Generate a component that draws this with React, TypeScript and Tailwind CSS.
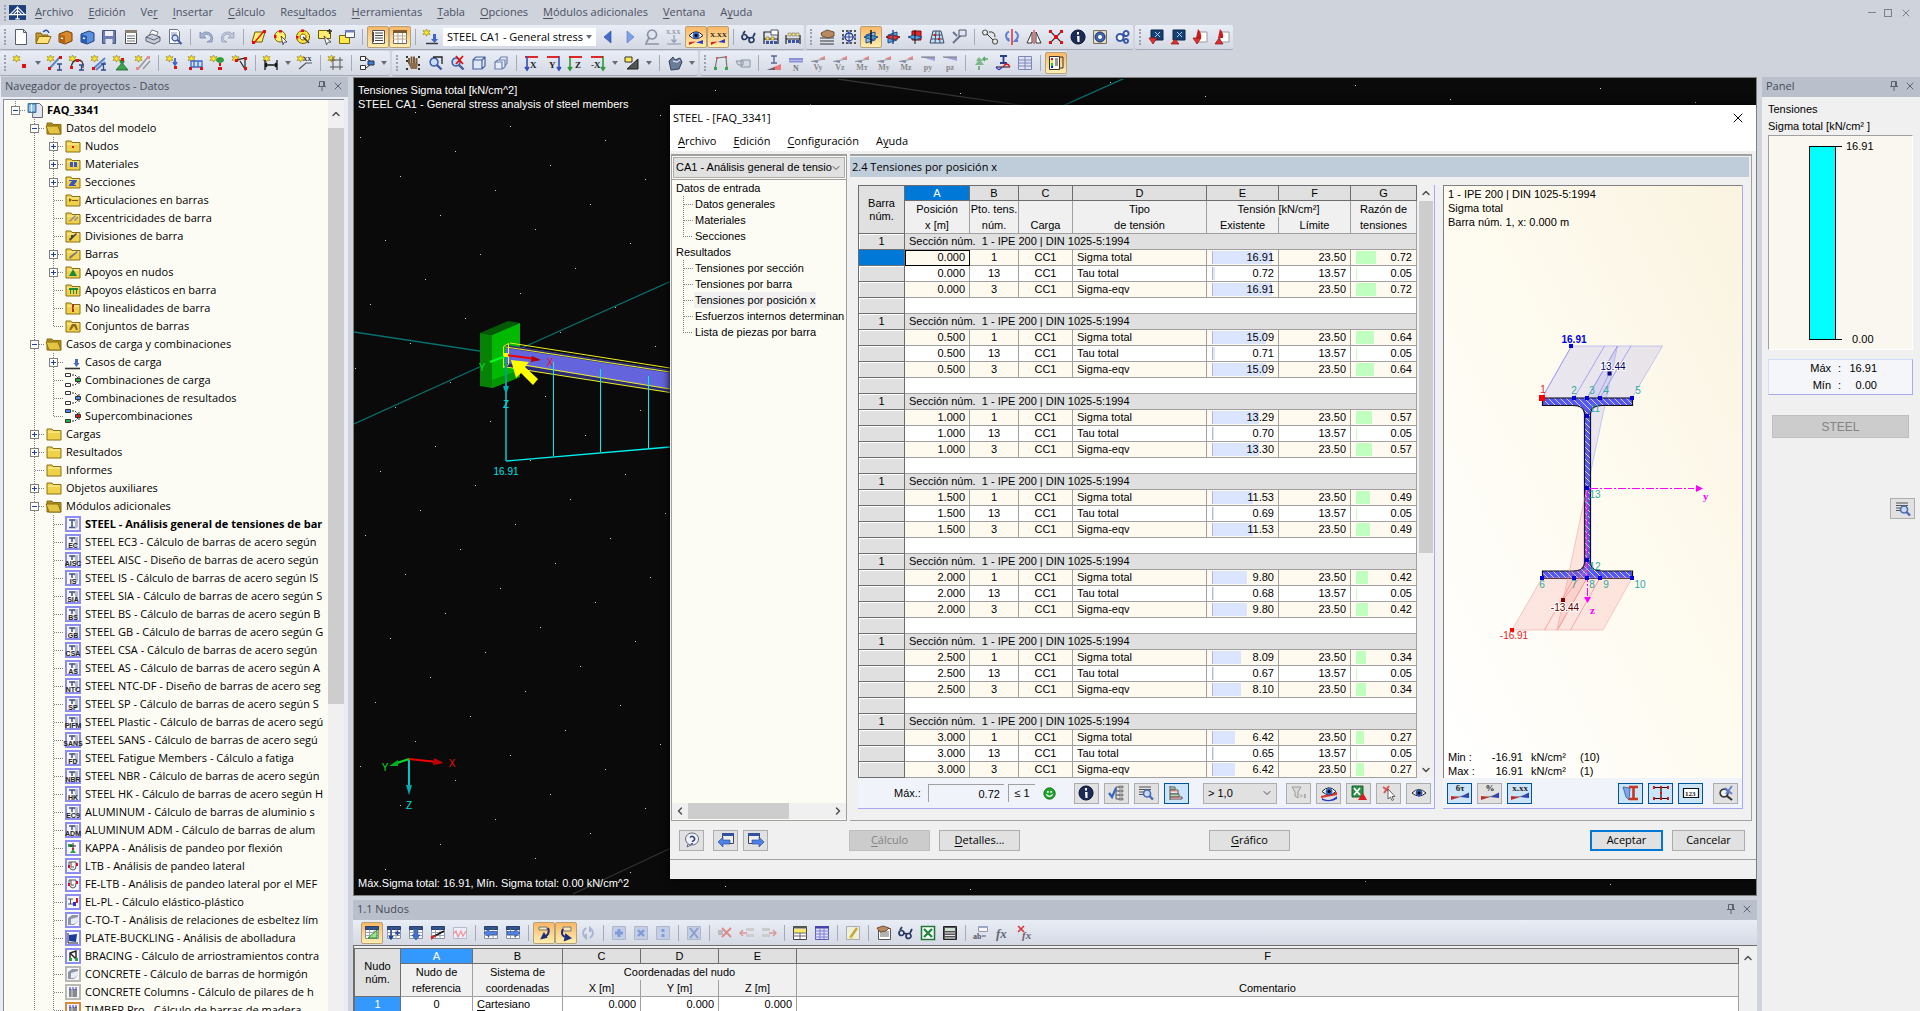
import type { ReactNode } from 'react'
import { ChevronDown, ChevronLeft, ChevronRight, ChevronUp, X } from 'lucide-react'

/* ---------- icons: [path, fill, stroke, stroke width] on a 16x16 grid ---------- */

type Shape = [string, string, string?, number?]
type Label = [string, number, number, string, number]

const STAR: Shape = ['M3.500 0l1 2.300 2.500-.8-1.300 2 1.300 2-2.500-.6-1 2.300-1-2.300L0 5.500l1.300-2L0 1.500l2.500.8z', '#ffe92b', '#8f7a00', 0.6]
const GRID: Shape = ['M1 2h14M1 5h14M1 8h14M1 11h14M1 14h14', 'none', '#333', 1]
const SHEET: Shape[] = [
    ['M1.500 2.500h13v11h-13z', '#fff', '#8a93a5'],
    ['M1.500 1.500h13v3h-13z', '#33558c', '#26406b'],
    ['M1.500 7.500h13M1.500 10.500h13M5.500 4.500v9M10 4.500v9', 'none', '#9aa3b5'],
]
const RAMP: Shape[] = [
    ['M-1 15v-4l9 1z', '#d22'],
    ['M17 7.500v5.500l-9-1z', '#2b3fc0'],
    ['M-1 13L17 10', 'none', '#555', 0.6],
]
const FADED_RAMP: Shape[] = [
    ['M9 3.500L15 1v4z', '#e88'],
    ['M1 6.500L8 5v3z', '#88a'],
    ['M1 6.500L15 4', 'none', '#999'],
]
const LENS: Shape[] = [
    ['M7 3a4 4 0 1 0 .1 0z', '#c9dcf5', '#3c5aa6', 1.5],
    ['M10 10l4.500 4.500', 'none', '#3c5aa6', 2.4],
]
const EYE: Shape[] = [
    ['M1 6.500Q8 -1 15 6.500Q8 13 1 6.500z', '#fff', '#222'],
    ['M8 3a3.500 3.500 0 1 0 .1 0z', '#2f63c8'],
    ['M8 5a1.500 1.500 0 1 0 .1 0z', '#000'],
]
const DISC_I: Shape[] = [['M8 1a7 7 0 1 0 .1 0z', '#1b2a56', '#0a1430'], ['M7 7h2.500v6h-2zM7 3h2v2.500h-2z', '#fff']]

const ICONS: Record<string, Shape[]> = {
    new: [['M2.500 .5h8l3 3v12h-11z', '#fff', '#555c6b'], ['M10.500 .5v3h3', 'none', '#555c6b']],
    open: [['M1 4h5l1 2h6v8H1z', '#c79a2b', '#7d5c10'], ['M4 7.500h12l-3 7H1z', '#ffe27a', '#8a6914'], ['M8 3q4-4 6 1', 'none', '#2a4fa8', 1.4]],
    cabinetA: [['M2 5l8-3 5 2v8l-7 3-6-2z', '#d9882c', '#70400b'], ['M2 5l6 2v8l-6-2z', '#b06313'], ['M4 9l2 .7', 'none', '#fff', 1.4]],
    cabinetB: [['M2 5l8-3 5 2v8l-7 3-6-2z', '#5c8fdd', '#1d3f80'], ['M2 5l6 2v8l-6-2z', '#2b5cb0'], ['M4 9l2 .7', 'none', '#fff', 1.4]],
    save: [['M1.500 1.500h13v13h-13z', '#6c7fae', '#46557c'], ['M4 2h8v5H4z', '#eef'], ['M4.500 10h7v5h-7z', '#dde3f0']],
    clip: [['M2.500 2.500h11v12h-11z', '#fff', '#4d4d4d'], ['M2 1h12v3H2z', '#8b8172'], ['M4 7h8M4 9.500h8M4 12h8', 'none', '#6b6f7a']],
    print: [['M4 6l3-5 6 2-2 5z', '#fff', '#777'], ['M1 8l6-3 8 3v4l-6 3-8-3z', '#c8cdda', '#59606f'], ['M1 8l8 3 6-3', 'none', '#59606f']],
    preview: [['M2.500 .5h8l2 2v12h-10z', '#fff', '#6b7386'], ['M4 4h6M4 6h4', 'none', '#8894b0'], ['M8 6a3 3 0 1 0 .1 0z', '#cfe0fa', '#3c5aa6', 1.3], ['M10.500 11l4 4', 'none', '#3c5aa6', 2]],
    undo: [['M2 3v6h6L5.500 6.800Q9 3.500 12 7T9 13h5Q16 6 11 3.500 6 2 4 5z', '#a9b6d3', '#6f7fa6', 0.7]],
    redo: [['M14 3v6H8l2.500-2.200Q7 3.500 4 7t3 6H2Q0 6 5 3.500 10 2 12 5z', '#c3cadb', '#8b96b3', 0.7]],
    para: [['M4 3h10l-3 10H1z', '#ffee70', '#6b5b00'], ['M3 14L13 2', 'none', '#d11', 1.4], ['M1 12h3v3H1zM12 1h3v3h-3z', '#d11']],
    circ: [['M7 2a5.500 5.500 0 1 0 .1 0z', '#ffee70', '#6b5b00'], ['M6 1h3v2.500H6zM1 6h2.500v3H1z', '#d11'], ['M8 7l6 6-3 .2-1 2.500z', '#fff', '#333', 0.8]],
    donut: [['M8 1.500a6.500 6.500 0 1 0 .1 0z', '#ffe13a', '#6b5b00'], ['M8 5a3 3 0 1 0 .1 0z', '#fff', '#6b5b00'], ['M6 .5h3v2.500H6zM1 7h2.500v2.500H1z', '#d11'], ['M8 8l6 6', 'none', '#333', 1.4]],
    select: [['M1.500 1.500h12v8h-12z', '#ffee70', '#6b5b00'], ['M10 2h5M12.500 0v5', 'none', '#333', 1.3], ['M7 7l7 6-3 .3-1.500 2.500z', '#fff', '#333', 0.8]],
    winY: [['M.5 6.500h10v8H.5z', '#ffe84d', '#7c6a00'], ['M6.500 1.500h9v7h-9z', '#fff', '#556'], ['M6 1h10v2.500H6z', '#6d7fb3']],
    list: [['M2.500 1.500h12v13h-12z', '#fff', '#555'], ['M5 4h8M5 6.500h8M5 9h8M5 11.500h8', 'none', '#444'], ['M3.500 3v10', 'none', '#444', 1]],
    table: [['M1.500 1.500h13v13h-13z', '#fff', '#666'], ['M1 1h14v3H1z', '#7d5a2b'], ['M1 7h14M1 10h14M6 4v10M10.500 4v10', 'none', '#b9a88c']],
    load: [STAR, ['M3 14.500h12', 'none', '#333', 1.4], ['M10 5h3v5h2l-3.500 4L8 10h2z', '#3f66c4']],
    prev: [['M11 2v12L4 8z', '#3f6cd0', '#28488f', 0.6]],
    next: [['M5 2v12l7-6z', '#7fa2e6', '#5475b8', 0.6]],
    lensOff: [['M8 1a4.500 4.500 0 1 0 .1 0z', '#dfe4ee', '#8a93a5', 1.6], ['M5 9l-3 5M1 15h14', 'none', '#8a93a5', 1.6]],
    arrowOff: [['M8 6v7M5.500 10.500L8 13.500l2.500-3', 'none', '#97a0b5', 1.3], ['M1 15h14', 'none', '#8a93a5']],
    eyeRamp: [...EYE, ['M1 16v-3l7-.5z', '#d22'], ['M15 11v4l-7-1.500z', '#2b3fc0']],
    xxxRamp: [['M1 16v-3l7-.5z', '#d22'], ['M15 10v4l-7-1z', '#2b3fc0']],
    glasses: [['M2 5l2-3M1 8a2.500 2.500 0 1 0 5 0a2.500 2.500 0 1 0 -5 0M8 11a2.500 2.500 0 1 0 5 0a2.500 2.500 0 1 0 -5 0M6 8l3 1M12 8l2-4', 'none', '#24375f', 1.7]],
    fenceA: [['M1 15V3h14v12M1 10h14', 'none', '#222', 1.2], ['M3 8h3v3H3zM8 8h3v3H8z', '#ffe13a', '#555', 0.5], ['M3 12h3v3H3zM7 12h3v3H7zM11 12h3v3h-3z', '#3953a8'], ['M8 1h7v5H8z', '#fff', '#556']],
    fenceB: [['M1 15V6M15 15V6M1 10h14', 'none', '#222', 1.2], ['M3 4h3v3H3zM7 4h3v3H7zM11 4h3v3h-3z', '#ffe97a', '#555', 0.5], ['M3 11h3v3H3zM7 11h3v3H7zM11 11h3v3h-3z', '#3953a8']],
    gridHand: [['M1 9h14M1 12h14M1 15h14', 'none', '#333', 1], ['M2 4l6-3 7 2v4l-6 2-6-2z', '#b98a62', '#5c3c1e', 0.8]],
    gridTarget: [['M1 1h2v2H1zM5 1h2v2H5zM9 1h2v2H9zM13 1h2v2h-2zM1 5h2v2H1zM13 5h2v2h-2zM1 9h2v2H1zM13 9h2v2h-2zM1 13h2v2H1zM5 13h2v2H5zM9 13h2v2H9zM13 13h2v2h-2z', '#555'], ['M8 4a4 4 0 1 0 .1 0z', '#e9ecf5', '#27409a', 1.3], ['M8 1v14M1 8h14', 'none', '#27409a']],
    planeA: [['M3 6l9-3v8l-9 3z', '#8fc0ea', '#1b4f86'], ['M1 8l6-2 8 2-6 3z', '#4f93d6', '#1b4f86'], ['M8 1v14', 'none', '#111', 1.4]],
    planeB: [['M3 6l9-3v8l-9 3z', '#5ea0dc', '#1b4f86'], ['M1 8l6-2 8 2-6 3z', '#e43a3a', '#7c1010'], ['M8 1v14', 'none', '#1b4f86', 1.4]],
    planeC: [['M5 2h9v9H5z', '#e22626', '#7c1010'], ['M1 8l6-2 8 2-6 3z', '#5ea0dc', '#1b4f86'], ['M8 1v14', 'none', '#111']],
    mesh: [['M4 2h8l3 12H1z', '#c5e0f5', '#3d4c66'], ['M3 6h10M2 10h12M7 2L6 14M10 2l1 12', 'none', '#3d4c66'], ['M5 5h2v2H5zM9 9h2v2H9z', '#d11']],
    tool: [['M2 14L11 5M2 3l4 4', 'none', '#6a7693', 2], ['M8 1h7v6H8z', '#dfe6f5', '#556']],
    chain: [['M3 1a2.500 2.500 0 1 0 .1 0zM13 10a2.500 2.500 0 1 0 .1 0z', '#eee', '#555', 1.2], ['M5 5l6 6M7 3q6-1 6 5', 'none', '#333']],
    rotate: [['M5 2.500Q-1 6 5 12l-1 -3M11 2.500q6 3.500 0 9.500l3 0', 'none', '#5c7fd0', 2], ['M8 0v16', 'none', '#d11', 1.3]],
    mirror: [['M1 14L6 3v11zM15 14L10 3v11z', '#fff', '#333'], ['M8 1v14', 'none', '#d11']],
    nodeX: [['M2 2l12 12M14 2L2 14', 'none', '#333', 1.2], ['M1 1h3v3H1zM12 1h3v3h-3zM1 12h3v3H1zM12 12h3v3h-3zM6 6h4v4H6z', '#d11']],
    info: DISC_I,
    gearBox: [['M1.500 1.500h13v13h-13z', '#e8ddc9', '#77705f'], ['M8 3a5 5 0 1 0 .1 0z', '#3f62a8', '#1d3468'], ['M8 6a2 2 0 1 0 .1 0z', '#fff']],
    gears: [['M6 5a3.500 3.500 0 1 0 .1 0zM12 2a2.500 2.500 0 1 0 .1 0zM12 10a2 2 0 1 0 .1 0z', '#fff', '#3a59a5', 2]],
    blueDown: [['M3 1h12v10H3z', '#16406f', '#0b2746'], ['M7 3l5 5M12 3L7 8', 'none', '#9fd0ff'], ['M1 9h8l-4 6z', '#e03030', '#8a1212', 0.7]],
    blueUp: [['M3 1h12v10H3z', '#16406f', '#0b2746'], ['M7 3l5 5M12 3L7 8', 'none', '#9fd0ff'], ['M1 15h8L5 10z', '#e03030', '#8a1212', 0.7]],
    pdfDown: [['M6 3h9v10H6z', '#fff', '#999'], ['M6 0q4 4 3 9H4z', '#c81e1e'], ['M1 9h8l-4 6z', '#e03030', '#8a1212', 0.7]],
    pdfUp: [['M6 3h9v10H6z', '#fff', '#999'], ['M6 0q4 4 3 9H4z', '#c81e1e'], ['M1 15h8L5 9z', '#e03030', '#8a1212', 0.7]],

    nodeStar: [STAR, ['M9 9h4v4H9z', '#d11']],
    barI: [STAR, ['M2 14L13 2', 'none', '#5a86c8', 2], ['M1 12h3v3H1zM12 1h3v3h-3z', '#d11'], ['M10 9h5M12.500 9v6M10 15h5', 'none', '#334a88', 1.3]],
    barArc: [STAR, ['M2 13Q3 5 9 5t5 8', 'none', '#333', 1.3], ['M1 11h3v3H1zM7 4h3v3H7z', '#d11'], ['M10 10h5M12.500 10v5M10 15h5', 'none', '#334a88', 1.3]],
    barSet: [STAR, ['M2 14L14 3M5 15L14 7', 'none', '#5a86c8', 2], ['M1 12h3v3H1z', '#d11'], ['M10 9h5M12.500 9v6M10 15h5', 'none', '#334a88', 1.3]],
    support: [STAR, ['M9 8l6 7H3z', '#3aa54a', '#1b5f26', 0.8], ['M9 4a2.500 2.500 0 1 0 .1 0z', '#2f8f3e'], ['M8 3h3v3H8z', '#d11']],
    barOff: [STAR, ['M3 14L13 2M8 14l7-8', 'none', '#999', 1.6], ['M1 12h3v3H1zM12 1h3v3h-3z', '#e88']],
    hinge: [STAR, ['M9 3v7M7 7l2 3 2-3', 'none', '#3f66c4', 1.8], ['M8 11h3v3H8z', '#d11']],
    distLoad: [STAR, ['M3 6h11v6H3zM6 6v6M10 6v6', '#cfe0fa', '#3f66c4', 1.3], ['M1 12h3v3H1zM12 12h3v3h-3z', '#d11']],
    treeLoad: [STAR, ['M10 2a4 3 0 1 0 .1 0z', '#2f9e3e'], ['M9 8h2v3H9zM8 12h4v3H8z', '#d11']],
    truss: [STAR, ['M4 5l9-2v11L8 6', 'none', '#333', 1.3], ['M3 4h3v3H3zM12 2h3v3h-3zM12 12h3v3h-3z', '#d11']],
    dim: [STAR, ['M2 5v10M14 5v10M2 10h12M4 8l-2 2 2 2M12 8l2 2-2 2', 'none', '#111', 1.3]],
    dimXX: [STAR, ['M2 14L9 8h6', 'none', '#555', 1.2]],
    frame: [STAR, ['M5 2v13M12 2v13M2 5h13M2 12h13', 'none', '#555', 1]],
    combo: [['M1.500 1.500h5v4h-5zM1.500 10.500h5v4h-5z', '#fff', '#333'], ['M7 3l4 3M7 13l4-3', 'none', '#333'], ['M9 6h6v4H9z', '#3a7be0', '#234']],
    hand: [['M1 1h2v2H1zM13 1h2v2h-2zM1 13h2v2H1zM13 13h2v2h-2zM1 5h2v2H1zM13 9h2v2h-2z', '#333'], ['M4 9V3M6.500 8V1.500M9 8V1.500M11.500 9V3', 'none', '#7a5c3c', 2], ['M3 8h10l-1 6H6z', '#8d6d4b']],
    zoomBox: [...LENS, ['M6 2h9v7', 'none', '#222', 1.3]],
    zoomX: [...LENS, ['M7 1l7 8M14 1L7 9', 'none', '#d11', 1.8]],
    cube: [['M2 5l3-3h9v9l-3 3H2zM2 5h9v9M11 5l3-3', '#dfe8f7', '#4762a0', 1.2]],
    cubes: [['M2 7h7v7H2zM2 7l3-2h7v7l-3 2M6 5l2-3h6v6l-2 3', '#e8eef9', '#6b7fae', 1.2]],
    axX: [['M1 2h13', 'none', '#d11', 1.8], ['M3 1v14M1 12l2 3 2-3', 'none', '#3350b8', 1.6]],
    axY: [['M13 1v14M11 12l2 3 2-3', 'none', '#3350b8', 1.6], ['M1 2h12', 'none', '#d11', 1.8]],
    axZ: [['M2 1v14M0 12l2 3 2-3', 'none', '#2b9a3a', 1.6], ['M1 2h13', 'none', '#d11', 1.8]],
    axMX: [['M13 1v14M11 12l2 3 2-3', 'none', '#2b9a3a', 1.6], ['M1 2h12', 'none', '#d11', 1.8]],
    slant: [['M1 2h7v5H1z', '#ffe84d', '#333'], ['M3 14L14 4v10z', '#555', '#222']],
    solid: [['M2 6l4-4 2 3 5-2 2 4-3 7-8 1z', '#6b7c99', '#33415c'], ['M6 6l4 1 3-2', 'none', '#cfd8ea', 1.3]],
    poly: [['M2 14L4 3l9-1 1 12', 'none', '#777', 1.2], ['M1 12h3v3H1zM12 12h3v3h-3z', '#3aa54a'], ['M3 2h2v2H3zM12 1h2v2h-2z', '#d55']],
    scroll: [['M1 6h7v4H3zM6 5h9v7H6z', '#d5d9e2', '#8a93a5']],
    iRamp: [['M5 1h6M8 1v7M5 8h6', 'none', '#5a6a99', 1.4], ['M1 15l14-6v6z', '#e77'], ['M1 15h8v-3z', '#667']],
    fN: [['M1 3h14v2H1zM1 5.500h14v2H1z', '#8b8fd6']],
    fV: FADED_RAMP,
    fP: [['M1 2h14v4z', '#9da0da'], ['M1 2h14', 'none', '#777']],
    treeArrows: [['M6 2l4 4H8l3 4H2l3-4H3z', '#7cb987'], ['M10 4h5M12 2l-2 2 2 2M6 11v4', 'none', '#5aa868', 1.6]],
    iCurve: [['M5 1h7M8.500 1v7M5 8h7', 'none', '#2b3f86', 1.8], ['M1 12h14', 'none', '#111'], ['M1 12q3 5 6 0', 'none', '#22c', 1.3], ['M8 12q4-6 7 0', 'none', '#d11', 1.3]],
    sheets: [['M1.500 1.500h13v13h-13zM1 5h14M1 8h14M1 11h14M8 2v13', '#dfe3f3', '#7d86b8', 1]],
    legend: [['M1.500 1.500h10v13h-10z', '#fff', '#333'], ['M3 3h2v2H3z', '#d11'], ['M3 5h2v3H3z', '#ee2'], ['M3 8h2v3H3z', '#2c3'], ['M3 11h2v2H3z', '#22d'], ['M7 4h3M7 6h3M7 8h3M7 10h3M12 2h3v11h-3', 'none', '#333']],

    sheetTri: [...SHEET, ['M4 13L13 5v8z', '#9be28c', '#2b8a2b']],
    sheetPM: [...SHEET, ['M5 5v8M3 11l2 3 2-3M9 8h5M11.500 5.500v5', 'none', '#1f3f9a', 1.5]],
    sheetDown: [...SHEET, ['M6.500 4h3v6h2.500L8 15 4 10h2.500z', '#3f72d8', '#1f3f8a', 0.6]],
    sheetRamp: [...SHEET, ['M1 13L14 6', 'none', '#111', 1.5], ['M1 15v-4l6-1z', '#d22']],
    sheetWave: [['M1.500 2.500h13v11h-13z', '#eef', '#b4bccb'], ['M1 9l3-3 2 6 3-6 2 5 3-5', 'none', '#e99', 1.3]],
    sheetL: [...SHEET, ['M1 8l5-4v2.500h8v3H6V12z', '#4f82e6', '#1f3f8a', 0.6]],
    sheetR: [...SHEET, ['M15 8l-5-4v2.500H2v3h8V12z', '#4f82e6', '#1f3f8a', 0.6]],
    curlA: [['M3 2h8v3H3z', '#f5e7b8', '#777'], ['M6 13q9-3 6-10M6 13l4-1-2-3z', 'none', '#1b2f7a', 2]],
    curlB: [['M5 2h8v4H5z', '#f5e7b8', '#777'], ['M12 13Q1 12 5 4M12 13l-4-3-1 5z', 'none', '#1b2f7a', 2]],
    cycle: [['M6 3q-6 5 0 10l0 -4M10 13q6-5 0-10l0 4', 'none', '#a9b6d3', 2]],
    opPlus: [['M1.500 1.500h13v13h-13z', '#c3cee6', '#b0b8c8'], ['M6.500 4h3v2.500H12v3H9.500V12h-3V9.500H4v-3h2.500z', '#7f9bdc']],
    opMul: [['M1.500 1.500h13v13h-13z', '#c3cee6', '#b0b8c8'], ['M5 5l6 6M11 5l-6 6', 'none', '#7f9bdc', 2.4]],
    opDiv: [['M1.500 1.500h13v13h-13z', '#c3cee6', '#b0b8c8'], ['M6.500 4h3v3h-3zM6.500 9h3v3h-3z', '#7f9bdc']],
    opX: [['M1.500 1.500h13v13h-13z', '#c3cee6', '#b0b8c8'], ['M4 3l8 10M12 3L4 13', 'none', '#8a9cc6', 1.8]],
    rowX: [['M1 5h5v5H1z', '#bbb'], ['M5 3l9 9M14 3L5 12', 'none', '#d88', 1.8]],
    rowL: [['M7 3h8v3H7zM7 9h8v3H7z', '#ccc'], ['M8 8H1M4 5L1 8l3 3', 'none', '#d99', 1.5]],
    rowR: [['M1 3h8v3H1zM1 9h8v3H1z', '#ccc'], ['M8 8h7M12 5l3 3-3 3', 'none', '#d99', 1.5]],
    tableY: [['M1.500 1.500h13v13h-13z', '#fff', '#444'], ['M1 1h14v2.500H1z', '#555'], ['M2 4h12v4H2z', '#ffe96b'], ['M1 8h14M1 11h14M8 8v6', 'none', '#666']],
    tableB: [['M1.500 1.500h13v13h-13z', '#dfe0fa', '#5a5ab0'], ['M1 1h14v2.500H1z', '#44a'], ['M1 6h14M1 9h14M1 12h14M6 3v11M10 3v11', 'none', '#8080cc']],
    brush: [['M1.500 1.500h13v13h-13z', '#eef0d8', '#aab'], ['M5 13L12 3', 'none', '#c2a83a', 2.4], ['M3 12h5v3z', '#e6d66a']],
    handSheet: [['M2.500 3.500h12v11h-12z', '#fff', '#555'], ['M4 7h9M4 9h9M4 11h9', 'none', '#666'], ['M1 3l6-2 6 2-3 3-6 1z', '#b98a62', '#5c3c1e', 0.8]],
    excel: [['M1.500 1.500h13v13h-13z', '#fff', '#1f7a38', 1.6], ['M4 4l8 8M12 4l-8 8', 'none', '#1f8a3c', 2.4]],
    calc: [['M1.500 1.500h13v13h-13z', '#555', '#222'], ['M3 3h10v3H3z', '#cfe0cf'], ['M3 8h10M3 10.500h10M3 13h10', 'none', '#eee', 1.2]],
    abEq: [['M5.500 1.500h9v5h-9z', '#f2f4fa', '#99a'], ['M5 1h10v2H5z', '#9aa6c8']],
    fx: [],
    fxOff: [['M1 1l6 6M7 1L1 7', 'none', '#d33', 1.6]],

    help: [['M8 1a6.500 6 0 1 0 .1 0zM4 12l-1 3 4-2', '#eef1f8', '#667'], ['M6 5.500Q8 3 10 5.500T8 9.500M8 11v1.500', 'none', '#2a3c78', 1.6]],
    winL: [['M4.500 1.500h11v10h-11z', '#eee', '#445'], ['M4 1h12v3H4z', '#34519c'], ['M0 10l5-5v3h7v4H5v3z', '#4f82e6', '#1f3f8a', 0.6]],
    winR: [['M.5 1.500h11v10H.5z', '#eee', '#445'], ['M0 1h12v3H0z', '#34519c'], ['M16 10l-5-5v3H4v4h7v3z', '#4f82e6', '#1f3f8a', 0.6]],
    check: [['M8 2h3M8 2v12h3M8 6h3M8 10h3', 'none', '#555'], ['M11 1h4v2h-4zM11 5h4v2h-4zM11 9h4v2h-4zM11 13h4v2h-4z', '#aaa', '#555', 0.6], ['M1 8l3 4 4-9', 'none', '#3a66c8', 2.2]],
    textLens: [['M1 2h12M1 4.500h12M1 7h5M1 9.500h4', 'none', '#555', 1.2], ['M9 5a3.500 3.500 0 1 0 .1 0z', '#c9dcf5', '#4a68b4', 1.5], ['M11.500 11l3.500 3.500', 'none', '#4a68b4', 2.4]],
    bars: [['M2 1v14M2 2h5v3H2M2 5h8v4H2M2 9h9v3H2M2 12h12v2H2', '#f2e6e6', '#555', 1], ['M3 6h6M3 13h10', 'none', '#e88'], ['M3 3.500h3M3 10h7', 'none', '#7c7']],
    filter: [['M1 2h9L7 7v6l-3-2V7z', '#d9d9d9', '#999']],
    eyeColor: [['M0 11l16-4v3L0 13z', '#d33'], ['M1 13q7 5 15-2v3q-7 4-15 1z', '#2b3fc0'], ...EYE],
    excelUp: [['M1 1h11v11H1z', '#2c9148', '#17602c'], ['M3 3l6 7M9 3l-6 7', 'none', '#fff', 1.8], ['M7 15h9l-4-7z', '#d81e1e']],
    pick: [['M2 2l7 5M8 1L3 8', 'none', '#d55', 2], ['M7 4v10l2.500-2 1.500 3.500 1.500-.8-1.500-3.200h3z', '#fff', '#444', 0.8]],
    eye: [['M1 8Q8 1 15 8Q8 14 1 8z', '#fff', '#222'], ['M8 4.500a3.500 3.500 0 1 0 .1 0z', '#3156b0'], ['M8 6.500a1.500 1.500 0 1 0 .1 0z', '#000']],
    ramp: RAMP,
    section: [['M0 2l7 1-1 12-3-3z', '#7fa6e8', '#33589c', 0.8], ['M6 2h9M10.500 2v12M6 14h9', 'none', '#c8371f', 2.6]],
    nodes: [['M2 2.500h12M8 2.500v11M2 13.500h12', 'none', '#111', 1.2], ['M0 1h2v3H0zM14 1h2v3h-2zM7 1h2v3H7zM7 7h2v2H7zM0 12h2v3H0zM14 12h2v3h-2zM7 12h2v3H7z', '#d11']],
    n123: [['M.5 3.500h15v9H.5z', '#fff', '#111', 1.2]],
    resetView: [['M6 4a4 4 0 1 0 .1 0z', '#eee', '#333', 1.6], ['M9 11l5 4', 'none', '#333', 2.2], ['M7 3l7 6M14 1L8 9', 'none', '#5c7fd0', 1.8]],
    smiley: [['M8 1a7 7 0 1 0 .1 0z', '#1fa52c', '#0b6416'], ['M5 5h2v2H5zM9 5h2v2H9z', '#fff'], ['M4 9q4 5 8 0', 'none', '#fff', 1.4]],
    doc: [['M6.500 1.500h6l3 3v11h-10z', '#e4e7ee', '#667'], ['M1 1.500h8v9H1z', '#5a9bd0', '#2d6390', 0.8], ['M2 4h6M2 6h6M2 8h6M4.500 2v8', 'none', '#fff', 0.8]],
    caseIcon: [['M0 14.500h15', 'none', '#333', 1.6], ['M10 5h3v4h1.500L11.500 13 8.500 9H10z', '#4a6bb8']],
}

const LABELS: Record<string, Label> = {
    arrowOff: ['X.XX', 0, 5, '#8a93a5', 6],
    xxxRamp: ['X.XX', 0, 8, '#222', 7],
    dimXX: ['XX', 6, 6, '#222', 6],
    axX: ['X', 6, 13, '#222', 9],
    axY: ['Y', 3, 13, '#222', 9],
    axZ: ['Z', 7, 13, '#222', 9],
    axMX: ['-X', 1, 13, '#222', 9],
    fN: ['N', 5, 16, '#777', 8],
    abEq: ['ab=', 0, 14, '#556', 8],
    fx: ['fx', 1, 13, '#667', 13],
    fxOff: ['fx', 5, 14, '#667', 11],
    filter: ['>1', 8, 13, '#888', 7],
    n123: ['123', 2, 11, '#111', 7],
}

function Icon({ name, text, size = 'h-4 w-4' }: { name: string; text?: string; size?: string }) {
    const label = LABELS[name]
    const dark = name === 'ramp'
    return (
        <svg viewBox="0 0 16 16" className={`${size} shrink-0 overflow-visible font-['Liberation_Serif',serif]`} aria-hidden="true">
            {ICONS[name].map(([d, fill, stroke, w], i) => (
                <path key={i} d={d} fill={fill} stroke={stroke} strokeWidth={w ?? 1} />
            ))}
            {label && <text x={label[1]} y={label[2]} fill={label[3]} fontSize={label[4]} fontWeight="bold" fontStyle={name.startsWith('fx') ? 'italic' : 'normal'}>{label[0]}</text>}
            {text && <text x="8" y={dark ? 6 : 15} textAnchor="middle" fill={dark ? '#222' : '#888'} fontSize={dark ? 9 : 8} fontWeight="bold">{text}</text>}
        </svg>
    )
}

/* ---------- main window toolbars: "|" separator, "v" caret, "*" pressed, "name:text" captioned ---------- */

function Tools({ items }: { items: string }) {
    return (
        <>
            {items.split(' ').map((item, i) => {
                if (item === '|') return <span key={i} className="mx-1 h-4 w-px shrink-0 bg-[#a4aab8]" />
                if (item === 'v')
                    return (
                        <button key={i} aria-label="Más" className="flex w-3 shrink-0 justify-center">
                            <span className="border-x-3 border-t-4 border-x-transparent border-t-[#666c7a]" />
                        </button>
                    )
                const pressed = item.startsWith('*')
                const [name, text] = item.replace('*', '').split(':')
                return (
                    <button
                        key={i}
                        aria-label={name}
                        className={`flex h-[22px] w-[22px] shrink-0 items-center justify-center ${pressed ? 'rounded-xs border border-[#b5a27a] bg-linear-to-b from-[#fbb765] to-[#fdeeb0]' : ''}`}
                    >
                        <Icon name={name} text={text} />
                    </button>
                )
            })}
        </>
    )
}

function Band({ children }: { children: ReactNode }) {
    return (
        <div className="flex h-[25px] shrink-0 items-center rounded-xs border-b border-[#a3a9b6] bg-linear-to-b from-[#e9edf6] to-[#d5d9e3]">
            <span className="mr-1 ml-1 h-4 border-l-2 border-dotted border-[#9aa0ae]" />
            {children}
        </div>
    )
}

const menu = ['_Archivo', '_Edición', 'Ve_r', '_Insertar', '_Cálculo', 'Res_ultados', '_Herramientas', '_Tabla', '_Opciones', '_Módulos adicionales', '_Ventana', 'A_yuda']

function Mnemonic({ text }: { text: string }) {
    const at = text.indexOf('_')
    if (at < 0) return <>{text}</>
    return (
        <>
            {text.slice(0, at)}
            <span className="underline underline-offset-2">{text[at + 1]}</span>
            {text.slice(at + 2)}
        </>
    )
}

function TopBars() {
    return (
        <header className="shrink-0 bg-[#cfd3dc]">
            <div className="flex h-[25px] items-center">
                <span className="ml-1 h-4 border-l-2 border-dotted border-[#9aa0ae]" />
                <svg viewBox="0 0 16 14" className="mr-1 ml-[3px] h-[15px] w-[17px]">
                    <path d="M0 0h16v14H0z" fill="#1d3f7c" />
                    <path d="M0 9h16M8 1v12M8 2L1 9M8 2l7 7M8 5L4 9M8 5l4 4M6 13h4" fill="none" stroke="#fff" strokeWidth="1" />
                </svg>
                <nav className="flex gap-[15px] pl-[5px] text-[11px] text-[#4a5163]">
                    {menu.map((m) => (
                        <button key={m}><Mnemonic text={m} /></button>
                    ))}
                </nav>
                <div className="ml-auto flex items-center gap-2 pr-2 text-[#7b8191]">
                    <span className="h-px w-2 bg-[#7b8191]" />
                    <span className="h-2 w-2 border border-[#7b8191]" />
                    <X className="h-3 w-3" />
                </div>
            </div>
            <div className="flex h-[26px] gap-0.5">
                <Band>
                    <Tools items="new open cabinetA cabinetB save clip print preview | undo redo | para circ donut select winY | *list *table | load" />
                    <div className="relative mx-px flex h-[18px] w-[153px] items-center bg-white">
                        <select aria-label="Caso" className="w-full appearance-none overflow-hidden pl-1 text-[11px] whitespace-nowrap text-black">
                            <option>STEEL CA1 - General stress</option>
                        </select>
                        <span className="pointer-events-none absolute right-1 border-x-3 border-t-4 border-x-transparent border-t-[#666c7a]" />
                    </div>
                    <Tools items="prev next lensOff arrowOff *eyeRamp *xxxRamp | glasses fenceA fenceB" />
                </Band>
                <Band><Tools items="gridHand gridTarget *planeA planeB planeC mesh tool | chain rotate mirror nodeX info gearBox gears" /></Band>
                <Band><Tools items="blueDown blueUp pdfDown pdfUp" /></Band>
            </div>
            <div className="flex h-[26px] gap-0.5">
                <Band><Tools items="nodeStar v barI barArc barSet support barOff | hinge distLoad treeLoad truss | dim v dimXX | frame | combo v" /></Band>
                <Band><Tools items="hand zoomBox zoomX cube cubes | axX axY axZ axMX v slant v | solid v" /></Band>
                <Band><Tools items="poly scroll | iRamp fN fV:Vy fV:Vz fV:Mт fV:My fV:Mz fP:py fP:pz | treeArrows iCurve sheets | *legend" /></Band>
            </div>
        </header>
    )
}

function PaneTitle({ children }: { children: ReactNode }) {
    return (
        <div className="flex h-5 shrink-0 items-center bg-[#b9c0cb] px-1 pb-0.5 text-[11px] text-[#454b59]">
            <h2>{children}</h2>
            <button aria-label="Fijar" className="mr-[5px] ml-auto">
                <svg viewBox="0 0 10 12" className="h-3 w-[10px]" fill="none" stroke="#5d6270">
                    <path d="M2.500 1.500h5v5h-5zM1 6.500h8M5 7v4M6.500 2v4" />
                </svg>
            </button>
            <button aria-label="Cerrar"><X className="h-3 w-3 text-[#5d6270]" /></button>
        </div>
    )
}

/* ---------- project navigator ---------- */

type Node = { level: number; label: string; box?: '+' | '-'; icon: string; last?: boolean; bold?: boolean }

const folders: [string, string, boolean, string][] = [
    ['Nudos', 'M7 8h2v2H7z', true, '#d11'],
    ['Materiales', 'M5 6h3v5H5zM9 6h3v5H9z', true, '#3a55c0'],
    ['Secciones', 'M4 6h8v1l-3 4h2v1H4v-1l3-4H4z', true, '#3a55c0'],
    ['Articulaciones en barras', 'M4 6l3 2-3 2zM7 8h6v1H7z', false, '#7a5a10'],
    ['Excentricidades de barra', 'M4 11l6-6 1 1-6 6zM9 10l4-4v2l-3 3z', false, '#8a8a90'],
    ['Divisiones de barra', 'M4 11l7-6 1 1-7 7zM6 7h2v2H6z', false, '#444'],
    ['Barras', 'M4 11l8-6 1 1-8 7z', true, '#77777c'],
    ['Apoyos en nudos', 'M8 5l4 7H4z', true, '#1f8a3c'],
    ['Apoyos elásticos en barra', 'M4 6h9v2h-1v4h-1V8H9v4H8V8H6v4H5V8H4z', false, '#1f8a3c'],
    ['No linealidades de barra', 'M7 4h2v3l-1 1 1 1v3H7z', false, '#b03030'],
    ['Conjuntos de barras', 'M4 12l3-6h4l2 6h-2l-2-4-3 4z', false, '#8a6a20'],
]
const modules: [string, string, string?][] = [
    ['STEEL - Análisis general de tensiones de bar', 'I'],
    ['STEEL EC3 - Cálculo de barras de acero según', 'EC'],
    ['STEEL AISC - Diseño de barras de acero según', 'AISC'],
    ['STEEL IS - Cálculo de barras de acero según IS', 'IS'],
    ['STEEL SIA - Cálculo de barras de acero según S', 'SIA'],
    ['STEEL BS - Cálculo de barras de acero según B', 'BS'],
    ['STEEL GB - Cálculo de barras de acero según G', 'GB'],
    ['STEEL CSA - Cálculo de barras de acero según', 'CSA'],
    ['STEEL AS - Cálculo de barras de acero según A', 'AS'],
    ['STEEL NTC-DF - Diseño de barras de acero seg', 'NTC'],
    ['STEEL SP - Cálculo de barras de acero según S', 'SP'],
    ['STEEL Plastic - Cálculo de barras de acero segú', 'PIFM'],
    ['STEEL SANS - Cálculo de barras de acero segú', 'SANS'],
    ['STEEL Fatigue Members - Cálculo a fatiga', 'FD'],
    ['STEEL NBR - Cálculo de barras de acero según', 'NBR'],
    ['STEEL HK - Cálculo de barras de acero según H', 'HK'],
    ['ALUMINUM - Cálculo de barras de aluminio s', 'EC9'],
    ['ALUMINUM ADM - Cálculo de barras de alum', 'ADM'],
    ['KAPPA - Análisis de pandeo por flexión', '#kappa'],
    ['LTB - Análisis de pandeo lateral', '#ltb'],
    ['FE-LTB - Análisis de pandeo lateral por el MEF', '#ltb'],
    ['EL-PL - Cálculo elástico-plástico', '#elpl'],
    ['C-TO-T - Análisis de relaciones de esbeltez lím', '#ctot'],
    ['PLATE-BUCKLING - Análisis de abolladura', '#plate'],
    ['BRACING - Cálculo de arriostramientos contra', '#bracing'],
    ['CONCRETE - Cálculo de barras de hormigón', '#ctot', '#b9b9b4'],
    ['CONCRETE Columns - Cálculo de pilares de h', '#column', '#b9b9b4'],
    ['TIMBER Pro - Cálculo de barras de madera', '#column', '#d98a3c'],
]

const tree: Node[] = [
    { level: 0, label: 'FAQ_3341', box: '-', icon: 'doc', bold: true },
    { level: 1, label: 'Datos del modelo', box: '-', icon: 'folderOpen' },
    ...folders.map(([label, d, open, color], i): Node => ({ level: 2, label, icon: `f|${d}|${color}`, box: open ? '+' : undefined, last: i === folders.length - 1 })),
    { level: 1, label: 'Casos de carga y combinaciones', box: '-', icon: 'folderOpen' },
    { level: 2, label: 'Casos de carga', box: '+', icon: 'caseIcon' },
    { level: 2, label: 'Combinaciones de carga', icon: 'c#fff,#fff,#24b33a' },
    { level: 2, label: 'Combinaciones de resultados', icon: 'c#fff,#fff,#4a8af0' },
    { level: 2, label: 'Supercombinaciones', icon: 'c#4a8af0,#24b33a,#d01818', last: true },
    { level: 1, label: 'Cargas', box: '+', icon: 'folder' },
    { level: 1, label: 'Resultados', box: '+', icon: 'folder' },
    { level: 1, label: 'Informes', icon: 'folder' },
    { level: 1, label: 'Objetos auxiliares', box: '+', icon: 'folder' },
    { level: 1, label: 'Módulos adicionales', box: '-', icon: 'folderOpen' },
    ...modules.map(([label, tag, color], i): Node => ({ level: 2, label, icon: `m${tag}|${color ?? '#8c8cf2'}`, bold: i === 0 })),
]

const MODULE_ART: Record<string, ReactNode> = {
    '#kappa': <><path d="M3 4h4v3H3z" fill="#2fa040" /><path d="M8 3v7M5 6h6" stroke="#222" fill="none" /><path d="M7 8h2v2H7z" fill="#d11" /><path d="M8 9l3 4H5z" fill="#2fa040" /></>,
    '#ltb': <><path d="M4 4h7v4q0 4-3 4t-4-4zM6 4v5h3" stroke="#555" fill="none" /><path d="M3 7h2v3H3zM11 5h2v3h-2z" fill="#d11" /></>,
    '#elpl': <><path d="M3 5h5M5.500 5v5M3 10h5" stroke="#555" fill="none" /><path d="M8 8h3v4H8z" fill="#33c" /><path d="M11 4h2v5h-2z" fill="#d11" /></>,
    '#ctot': <><path d="M3 6l4-3h6v6l-4 4H3z" fill="#8e96a6" /><path d="M6 7l7-2v4l-4 3H6z" fill="#e9ecf2" /></>,
    '#plate': <><path d="M4 5l8-1-1 8-7-1z" fill="#1c3c9c" /><path d="M3 3v10h10" stroke="#222" fill="none" /></>,
    '#bracing': <><path d="M5 12V5l6-2v8M5 5l6 6" stroke="#222" strokeWidth="1.400" fill="none" /><path d="M4 10h3v3H4zM10 10h3v3h-3z" fill="#2fa040" /></>,
    '#column': <><path d="M4 5h8v8H4z" fill="#84888f" /><path d="M5 3v3M8 3v3M11 3v3" stroke="#33c" /><path d="M7 5v8" stroke="#d8dade" /></>,
}

function NodeIcon({ icon }: { icon: string }) {
    if (icon === 'doc' || icon === 'caseIcon') return <Icon name={icon} />
    if (icon[0] === 'c') {
        const [a, b, c] = icon.slice(1).split(',')
        return (
            <svg viewBox="0 0 16 16" className="h-4 w-4 overflow-visible" stroke="#333">
                <path d="M7 3h3l4 4M7 13h3l4-4M14 4v3h-3M14 12V9h-3" fill="none" strokeDasharray="2 1" />
                <path d="M.5 1.500h5v3h-5z" fill={a} />
                <path d="M.5 11.500h5v3h-5z" fill={b} />
                <path d="M10.500 6.500h5v3h-5z" fill={c} />
            </svg>
        )
    }
    if (icon[0] === 'm') {
        const [tag, color] = icon.slice(1).split('|')
        return (
            <svg viewBox="0 0 16 16" className="h-4 w-4 overflow-visible font-['Liberation_Sans',sans-serif]">
                <path d="M1 1h14v14H1z" fill="#f6f6fb" stroke={color} strokeWidth="2" />
                {MODULE_ART[tag] ?? (
                    <>
                        <path d="M6 3h7v8l-3 2V6z" fill="#b5b9c2" />
                        <path d={tag === 'I' ? 'M4 4h6M7 4v7M4 11.500h6' : 'M4 4h6M7 4v4'} fill="none" stroke="#4a5a8c" strokeWidth="1.600" />
                        {tag !== 'I' && <text x="8" y="14" textAnchor="middle" fontSize="7" fontWeight="bold" fill="#222">{tag}</text>}
                    </>
                )}
            </svg>
        )
    }
    const open = icon === 'folderOpen'
    const [kind, glyph, color] = icon.split('|')
    return (
        <svg viewBox="0 0 16 16" className="h-4 w-4 overflow-visible">
            <path d="M1 3h5l1 1.500h8V14H1z" fill={open ? '#b08d1c' : '#f0d24a'} stroke="#8a6e14" />
            {open ? <path d="M0 6h12l3 8H3z" fill="#e3c443" stroke="#8a6e14" /> : <path d="M2 6h12" stroke="#fff3a8" />}
            {kind === 'f' && <path d={glyph} fill={color} />}
        </svg>
    )
}

function Guide({ path, box }: { path?: string; box?: '+' | '-' }) {
    return (
        <svg viewBox="0 0 19 18" className="h-[18px] w-[19px] shrink-0" shapeRendering="crispEdges" fill="none" stroke="#808080">
            {path && <path d={path} strokeDasharray="1 1" />}
            {box && <path d="M5.500 5.500h8v8h-8z" fill="#fff" />}
            {box && <path d={box === '+' ? 'M7 9.500h5M9.500 7v5' : 'M7 9.500h5'} stroke="#1f3f9a" />}
        </svg>
    )
}

const THROUGH = 'M9.500 0v18'
const BRANCH = 'M9.500 0v18M10 9.500h9'
const CORNER = 'M9.500 0v9.500h9.500'

function Navigator() {
    return (
        <aside className="flex w-[348px] shrink-0 flex-col bg-[#e9ecf4] pl-px">
            <PaneTitle>Navegador de proyectos - Datos</PaneTitle>
            <div className="mt-0.5 mr-1 ml-0.5 flex min-h-0 flex-1 border-t border-l border-[#868c98] bg-[#fcfcf4]">
                <ul className="min-w-0 flex-1 overflow-hidden pt-px text-[11px] leading-[18px] whitespace-nowrap text-black">
                    {tree.map((n) => (
                        <li key={n.label} className="flex pl-0.5">
                            {n.level > 0 && <Guide />}
                            {n.level > 1 && <Guide path={THROUGH} />}
                            <Guide path={n.level === 0 || n.last ? CORNER : BRANCH} box={n.box} />
                            <span className="mr-0.5 flex w-5 shrink-0 items-center justify-center"><NodeIcon icon={n.icon} /></span>
                            <span className={n.bold ? 'font-bold' : ''}>{n.label}</span>
                        </li>
                    ))}
                </ul>
                <div className="flex w-4 shrink-0 flex-col items-center bg-[#f0f0f0]">
                    <ChevronUp className="my-2 h-3 w-3 shrink-0 text-[#505050]" strokeWidth={3} />
                    <div className="h-[576px] w-full bg-[#cdcdcd]" />
                </div>
            </div>
        </aside>
    )
}

/* ---------- 3D view ---------- */

const dots: [number, number][] = []
for (let i = -4; i < 26; i++) {
    for (let j = -12; j < 48; j++) {
        const x = 6 + i * 95 - j * 55
        const y = 58 + i * 14 + j * 25
        if (x > 0 && x < 1400 && y > 0 && y < 812) dots.push([x, y])
    }
}

function Scene() {
    return (
        <svg className="absolute inset-x-0 top-px h-full w-full font-['Liberation_Sans',sans-serif]" fontSize="10">
            {dots.map(([x, y]) => <rect key={`${x},${y}`} x={x} y={y} width="1" height="1" fill="#b9d3b9" />)}
            <g fill="none" stroke="#0a6f6f" strokeWidth="1.300">
                <path d="M0 253L152 276M0 345L152 276L771 -1" />
                <path d="M484 0L672 27M219 815L317 769" stroke="#333" />
            </g>
            <path d="M126 254l28-12 12 2-28 12z" fill="#055a05" />
            <path d="M126 254l12 2v53l-12-2z" fill="#078207" />
            <path d="M138 256l28-12v54l-28 11z" fill="#00b900" />
            <path d="M138 301l28-10v7l-28 11z" fill="#029602" />
            <path d="M152 266l164 25v22l-164-25z" fill="#6464dc" />
            <path d="M152 266l164 25v3l-164-25zM152 284l164 26v3l-164-25z" fill="#2a2a70" />
            <g fill="none" stroke="#f0f020" strokeWidth="1">
                <path d="M156 264l160 25M152 268l164 25M158 284l158 26M152 288l164 25.500M149.500 267.500l5-3v21l-5 3z" />
            </g>
            <g fill="none" stroke="#00f0f0" strokeWidth="1">
                <path d="M152 382L316 368" strokeWidth="1.400" />
                <path d="M199.500 283v94M246.500 290v83M294.500 297v72" shapeRendering="crispEdges" />
                <path d="M152 276v106" stroke="#0a9a9a" strokeWidth="2" />
            </g>
            <path d="M149 307h6l-3 9z" fill="#0aa" />
            <path d="M152 277l-16 6" stroke="#00ff20" strokeWidth="2" />
            <path d="M152 276l30 4" stroke="#f00000" strokeWidth="2" />
            <path d="M178 277l9 4-10 2z" fill="#b00000" />
            <path d="M150 274h4v4h-4z" fill="#ff0" />
            <path d="M157 281l18 2-4 5 13 12-5 6-12-12-5 5z" fill="#ff0" />
            <g textAnchor="middle">
                <text x="196" y="287" fill="#f01010">X</text>
                <text x="128" y="292" fill="#00e020">Y</text>
                <text x="152" y="329" fill="#00e0e0">Z</text>
                <text x="152" y="396" fill="#00e0e0">16.91</text>
                <path d="M55 680v30" stroke="#00c8c8" strokeWidth="2" />
                <path d="M52 706h6l-3 10z" fill="#0aa" />
                <path d="M55 680l28 3" stroke="#f00000" strokeWidth="2" />
                <path d="M80 679l10 5-11 2z" fill="#c00000" />
                <path d="M55 680l-15 5" stroke="#00e020" strokeWidth="2" />
                <path d="M44 681l-9 6 9 0z" fill="#00b018" />
                <text x="98" y="688" fill="#f01010">X</text>
                <text x="31" y="692" fill="#00e020">Y</text>
                <text x="55" y="730" fill="#00e0e0">Z</text>
            </g>
        </svg>
    )
}

/* ---------- module dialog ---------- */

const results: { x: string; ratio: string; sigma: string; tau: string; eqv: string }[] = [
    { x: '0.000', ratio: '0.72', sigma: '16.91', tau: '0.72', eqv: '16.91' },
    { x: '0.500', ratio: '0.64', sigma: '15.09', tau: '0.71', eqv: '15.09' },
    { x: '1.000', ratio: '0.57', sigma: '13.29', tau: '0.70', eqv: '13.30' },
    { x: '1.500', ratio: '0.49', sigma: '11.53', tau: '0.69', eqv: '11.53' },
    { x: '2.000', ratio: '0.42', sigma: '9.80', tau: '0.68', eqv: '9.80' },
    { x: '2.500', ratio: '0.34', sigma: '8.09', tau: '0.67', eqv: '8.10' },
    { x: '3.000', ratio: '0.27', sigma: '6.42', tau: '0.65', eqv: '6.42' },
]

const cell = 'h-4 border border-[#a0a0a0] p-0 leading-[15px] font-normal'
const rowHead = 'h-4 border border-[#6d6d6d] bg-[#e0e0e0] p-0 text-center leading-[15px] font-normal shadow-[inset_1px_1px_0_#fff]'
const colHead = 'h-[15px] border border-[#6d6d6d] bg-[#e0e0e0] p-0 leading-[14px] font-normal'
const label = 'h-4 border-x border-[#a0a0a0] bg-[#f0f0f0] p-0 leading-4 font-normal'

function BarCell({ value, scale, color }: { value: string; scale: number; color: string }) {
    return (
        <td className={`${cell} relative pr-1 text-right`}>
            <span className={`absolute top-px left-[5px] h-[13px] min-w-px ${color}`} style={{ width: Math.round(Number(value) * scale) }} />
            <span className="relative">{value}</span>
        </td>
    )
}

function StressRow({ x, point, kind, value, limit, ratio, active, shaded }: { x: string; point: string; kind: string; value: string; limit: string; ratio: string; active?: boolean; shaded?: boolean }) {
    return (
        <tr className={shaded ? 'bg-[#fffaf0]' : 'bg-white'}>
            <th className={active ? 'h-4 border border-[#6d6d6d] bg-[#0078d7] p-0' : rowHead} />
            <td className={`${cell} pr-1 text-right ${active ? 'outline -outline-offset-1 outline-black' : ''}`}>{x}</td>
            <td className={`${cell} text-center`}>{point}</td>
            <td className={`${cell} text-center`}>CC1</td>
            <td className={`${cell} pl-1`}>{kind}</td>
            <BarCell value={value} scale={3.56} color="border-l border-[#b4b9c8] bg-[#dbe5fe]" />
            <td className={`${cell} pr-1 text-right`}>{limit}</td>
            <BarCell value={ratio} scale={28} color="bg-[#c0ffc0]" />
        </tr>
    )
}

function StressTable() {
    return (
        <table className="w-[558px] table-fixed border-collapse self-start text-[11px] text-black font-['Liberation_Sans',sans-serif]">
            <colgroup>
                <col className="w-[46px]" /><col className="w-[65px]" /><col className="w-[49px]" /><col className="w-[54px]" />
                <col className="w-[134px]" /><col className="w-[72px]" /><col className="w-[72px]" /><col className="w-[66px]" />
            </colgroup>
            <thead>
                <tr>
                    <th rowSpan={3} className="border border-[#6d6d6d] bg-[#e0e0e0] p-0 leading-[13px] font-normal">Barra<br />núm.</th>
                    <th className="border border-[#6d6d6d] bg-[#0078d7] p-0 leading-[14px] font-normal text-white">A</th>
                    {['B', 'C', 'D', 'E', 'F', 'G'].map((c) => <th key={c} className={colHead}>{c}</th>)}
                </tr>
                <tr>
                    <th className={label}>Posición</th>
                    <th className={label}>Pto. tens.</th>
                    <th className={label} />
                    <th className={label}>Tipo</th>
                    <th className={label} colSpan={2}>Tensión [kN/cm²]</th>
                    <th className={label}>Razón de</th>
                </tr>
                <tr>
                    {['x [m]', 'núm.', 'Carga', 'de tensión', 'Existente', 'Límite', 'tensiones'].map((c) => <th key={c} className={label}>{c}</th>)}
                </tr>
            </thead>
            {results.map((g, i) => (
                <tbody key={g.x}>
                    <tr className="bg-[#e0e0e0]">
                        <th className={rowHead}>1</th>
                        <td colSpan={7} className={`${cell} pl-1 whitespace-pre`}>{'Sección núm.  1 - IPE 200 | DIN 1025-5:1994'}</td>
                    </tr>
                    <StressRow x={g.x} point="1" kind="Sigma total" value={g.sigma} limit="23.50" ratio={g.ratio} active={i === 0} shaded />
                    <StressRow x={g.x} point="13" kind="Tau total" value={g.tau} limit="13.57" ratio="0.05" />
                    <StressRow x={g.x} point="3" kind="Sigma-eqv" value={g.eqv} limit="23.50" ratio={g.ratio} shaded />
                    {i < results.length - 1 && (
                        <tr className="bg-white">
                            <th className={rowHead} />
                            <td colSpan={7} className={cell} />
                        </tr>
                    )}
                </tbody>
            ))}
        </table>
    )
}

const pointLabels: [string, number, number][] = [
    ['2', 130, 208], ['3', 148, 208], ['4', 162, 208], ['5', 194, 208], ['11', 151, 226], ['13', 151, 312], ['12', 151, 384],
    ['6', 98, 402], ['7', 130, 402], ['8', 148, 402], ['9', 162, 402], ['10', 196, 402],
]
const pointMarks: [number, number][] = [
    [130, 212], [143, 212], [156, 212], [188, 212], [143, 230], [143, 302], [143, 374], [98, 392], [130, 392], [143, 392], [156, 392], [188, 392], [127, 160],
]

function SectionDrawing() {
    return (
        <svg className="h-full w-full font-['Liberation_Sans',sans-serif]" fontSize="10">
            <defs>
                <pattern id="hatch" width="6" height="6" patternUnits="userSpaceOnUse">
                    <path d="M0 0h6v6H0z" fill="#5656f4" />
                    <path d="M-1 -1l8 8M-1 5l2 2M5 -1l2 2" stroke="#d4d4ff" strokeWidth="1" />
                </pattern>
            </defs>
            <path d="M98 212l29.500-52h91L188 212z" fill="#6464f0" fillOpacity=".13" stroke="#9a9af0" strokeOpacity=".5" />
            <path d="M143 212l30.500-52L146 289l-3 13z" fill="#6464f0" fillOpacity=".13" stroke="#9a9af0" strokeOpacity=".5" />
            <path d="M98 212l29.500-52M130 212l30.500-52M143 212l30.500-52M156 212l31-52M147 224l18-36" fill="none" stroke="#8a8af4" strokeOpacity=".7" />
            <path d="M98.500 212h90v7.500H158q-11 0-11.500 8V377q.5 8 11.500 8h30.500v7.500h-90V385H129q11 0 11.500-8V227.500q-.5-8-11.500-8H98.500z" fill="url(#hatch)" stroke="#111" strokeWidth="1.200" />
            <path d="M98 392l-30 52h91l29-52z" fill="#f06464" fillOpacity=".15" stroke="#f09a9a" strokeOpacity=".5" />
            <path d="M143 392l-30 52L140 315l3-13z" fill="#f06464" fillOpacity=".15" stroke="#f09a9a" strokeOpacity=".5" />
            <path d="M130 392l-29.500 52M143 392l-29.500 52M156 392l-29.500 52M143 382l-24 32" fill="none" stroke="#f48a8a" strokeOpacity=".7" />
            <path d="M146 302.500h104" stroke="#f0f" strokeDasharray="8 2 2 2" />
            <path d="M252 299l7 3.500-7 3.500zM140 411h7l-3.500 6z" fill="#f0f" />
            <path d="M143.500 304v107" stroke="#f0f" strokeDasharray="8 2 2 2" />
            {pointMarks.map(([x, y]) => <rect key={`${x},${y}`} x={x - 2} y={y - 2} width="4" height="4" fill="#0000e0" />)}
            <path d="M95 209h6v6h-6zM66 442h4v4h-4z" fill="#f00" />
            <path d="M163.500 185.500h4v4h-4z" fill="#000080" />
            <path d="M117 412h4v4h-4z" fill="#800000" />
            <g textAnchor="middle">
                {pointLabels.map(([t, x, y]) => <text key={t} x={x} y={y} fill="#2fa89e">{t}</text>)}
                <text x="99" y="207" fill="#f02020">1</text>
                <text x="130" y="157" fill="#0000e0" fontWeight="bold">16.91</text>
                <text x="169" y="184" fill="#000060" stroke="#fff" strokeWidth="2" paintOrder="stroke">13.44</text>
                <text x="121" y="425" fill="#600000" stroke="#fff" strokeWidth="2" paintOrder="stroke">-13.44</text>
                <text x="70" y="453" fill="#f02020">-16.91</text>
            </g>
            <g fill="#f0f" fontSize="11" className="font-['Liberation_Serif',serif]" fontWeight="bold">
                <text x="259" y="314">y</text>
                <text x="146" y="428">z</text>
            </g>
        </svg>
    )
}

function IconButton({ name, on, text }: { name: string; on?: boolean; text?: string }) {
    return (
        <button
            aria-label={name}
            className={`flex h-[21px] w-[25px] shrink-0 items-center justify-center border ${on ? 'border-[#005499] bg-[#cce4f7]' : 'border-[#adadad] bg-[#e1e1e1]'}`}
        >
            <Icon name={name} text={text} />
        </button>
    )
}

const pushButton = 'h-[21px] border border-[#adadad] bg-[#e1e1e1]'

const sections: [string, string[]][] = [
    ['Datos de entrada', ['Datos generales', 'Materiales', 'Secciones']],
    ['Resultados', ['Tensiones por sección', 'Tensiones por barra', 'Tensiones por posición x', 'Esfuerzos internos determinan', 'Lista de piezas por barra']],
]

function DialogTree() {
    return (
        <div className="flex w-[176px] shrink-0 flex-col border-t-2 border-r border-b border-l border-[#a0a0a0] bg-[#fcfcf4]">
            <div className="relative m-px flex h-[21px] shrink-0 items-center border border-[#adadad] bg-[#e1e1e1]">
                <select aria-label="Caso" className="w-full appearance-none overflow-hidden pl-0.5 whitespace-nowrap">
                    <option>CA1 - Análisis general de tensio</option>
                </select>
                <ChevronDown className="pointer-events-none absolute right-0.5 h-3 w-3 text-[#505050]" />
            </div>
            <div className="flex-1 overflow-hidden border-t border-[#a0a0a0] pl-1 leading-4 whitespace-nowrap">
                {sections.map(([title, items]) => (
                    <div key={title}>
                        <p>{title}</p>
                        <ul>
                            {items.map((t, i) => (
                                <li key={t} className="flex">
                                    <svg viewBox="0 0 18 16" className="h-4 w-[18px] shrink-0" fill="none" stroke="#808080" shapeRendering="crispEdges">
                                        <path d={i === items.length - 1 ? 'M7.500 0v8.500h9' : 'M7.500 0v16M8 8.500h9'} strokeDasharray="1 1" />
                                    </svg>
                                    <a href="#" className={`px-px ${t === 'Tensiones por posición x' ? 'bg-[#f0f0f0]' : ''}`}>{t}</a>
                                </li>
                            ))}
                        </ul>
                    </div>
                ))}
            </div>
            <div className="mb-px flex h-4 items-center bg-[#f0f0f0] text-[#505050]">
                <ChevronLeft className="mx-0.5 h-3 w-3 shrink-0" strokeWidth={3} />
                <div className="h-4 w-[101px] bg-[#cdcdcd]" />
                <ChevronRight className="mr-0.5 ml-auto h-3 w-3 shrink-0" strokeWidth={3} />
            </div>
        </div>
    )
}

function Dialog() {
    return (
        <div role="dialog" aria-label="STEEL" className="absolute top-[27px] right-0 bottom-4 left-[316px] flex flex-col bg-[#f0f0f0] text-[11px] text-black shadow-[0_0_8px_#000] font-['Liberation_Sans',sans-serif]">
            <div className="flex h-[26px] shrink-0 items-center bg-white pr-[10px] pl-[3px] font-['Open_Sans',sans-serif]">
                <h1>STEEL - [FAQ_3341]</h1>
                <button aria-label="Cerrar" className="ml-auto"><X className="h-4 w-4" strokeWidth={1.500} /></button>
            </div>
            <nav className="mb-[3px] flex h-5 shrink-0 items-center gap-[17px] bg-white pl-2 font-['Open_Sans',sans-serif]">
                {['_Archivo', '_Edición', '_Configuración', 'A_yuda'].map((m) => <button key={m}><Mnemonic text={m} /></button>)}
            </nav>
            <div className="flex min-h-0 flex-1 gap-[3px] pr-1 pl-px">
                <DialogTree />
                <div className="flex min-w-0 flex-1 flex-col border-t-2 border-r border-b border-[#a0a0a0]">
                    <h2 className="mt-px mr-0.5 mb-2 h-5 shrink-0 bg-[#bfccda] pl-[2px] text-[11px] leading-5 font-['Open_Sans',sans-serif]">2.4 Tensiones por posición x</h2>
                    <div className="mx-2 mb-[11px] flex min-h-0 flex-1 gap-2">
                        <div className="flex flex-col border-r border-b border-[#a9a9f0] bg-[#f0f4fa]">
                            <div className="flex min-h-0 flex-1 overflow-hidden">
                                <StressTable />
                                <div className="flex w-[17px] flex-col items-center bg-[#f0f0f0] text-[#505050]">
                                    <ChevronUp className="my-[2px] h-3 w-3 shrink-0" strokeWidth={3} />
                                    <div className="h-[352px] w-[14px] shrink-0 bg-[#cdcdcd]" />
                                    <ChevronDown className="mt-auto mb-[2px] h-3 w-3 shrink-0" strokeWidth={3} />
                                </div>
                            </div>
                            <div className="flex h-[30px] shrink-0 items-center pr-[3px]">
                                <label htmlFor="max" className="mr-[7px] ml-9">Máx.:</label>
                                <input id="max" readOnly value="0.72" className="h-[18px] w-[76px] border-t border-l border-[#a0a0a0] bg-[#f0f4fa] pr-1 text-right" />
                                <span className="mx-1 h-[18px] w-[27px] border-t border-l border-[#a0a0a0] text-center leading-4">≤ 1</span>
                                <span className="mr-[18px] ml-1"><Icon name="smiley" size="h-[13px] w-[13px]" /></span>
                                <span className="flex gap-[5px]">
                                    <IconButton name="info" /><IconButton name="check" /><IconButton name="textLens" /><IconButton name="bars" on />
                                </span>
                                <span className="relative mr-[9px] ml-auto flex h-[21px] w-[74px] items-center border border-[#adadad] bg-[#e1e1e1]">
                                    <select aria-label="Filtro" className="w-full appearance-none pl-1">
                                        <option>&gt; 1,0</option>
                                    </select>
                                    <ChevronDown className="pointer-events-none absolute right-[3px] h-3 w-3 text-[#505050]" />
                                </span>
                                <span className="flex gap-[5px]">
                                    <IconButton name="filter" /><IconButton name="eyeColor" /><IconButton name="excelUp" /><IconButton name="pick" /><IconButton name="eye" />
                                </span>
                            </div>
                        </div>
                        <div className="flex min-w-0 flex-1 flex-col border-r border-b border-[#a9a9f0] bg-[#f0f4fa]">
                            <div className="relative min-h-0 flex-1 border-t border-l border-[#808080] bg-linear-to-tr from-white via-[#fefbf0] to-[#faf3e0]">
                                <SectionDrawing />
                                <p className="absolute top-px left-1 leading-[14px]">1 - IPE 200 | DIN 1025-5:1994<br />Sigma total<br />Barra núm. 1, x: 0.000 m</p>
                                <div className="absolute bottom-0 left-1 grid grid-cols-[30px_45px_49px_auto] leading-[14px] whitespace-nowrap">
                                    <span>Min :</span><span className="text-right">-16.91</span><span className="pl-2">kN/cm²</span><span className="pl-2">(10)</span>
                                    <span>Max :</span><span className="text-right">16.91</span><span className="pl-2">kN/cm²</span><span className="pl-2">(1)</span>
                                </div>
                            </div>
                            <div className="flex h-[30px] shrink-0 items-center gap-[5px] px-1">
                                <IconButton name="ramp" text="6τ" on /><IconButton name="ramp" text="%" /><IconButton name="ramp" text="x.xx" on />
                                <span className="flex-1" />
                                <IconButton name="section" on /><IconButton name="nodes" on /><IconButton name="n123" on />
                                <span className="w-0" />
                                <IconButton name="resetView" />
                            </div>
                        </div>
                    </div>
                </div>
            </div>
            <div className="flex h-[39px] shrink-0 items-center border-b border-[#a0a0a0] pr-[11px] pl-[9px] font-['Open_Sans',sans-serif]">
                <IconButton name="help" />
                <span className="ml-[9px] flex w-[136px] gap-[5px]"><IconButton name="winL" /><IconButton name="winR" /></span>
                <button disabled className="h-[21px] w-[81px] border border-[#bfbfbf] bg-[#cccccc] text-[#838383]"><Mnemonic text="_Cálculo" /></button>
                <button className={`${pushButton} ml-[9px] w-[81px]`}><Mnemonic text="_Detalles..." /></button>
                <button className={`${pushButton} mr-auto ml-[189px] w-[81px]`}><Mnemonic text="_Gráfico" /></button>
                <button className="h-[21px] w-[73px] border-2 border-[#0078d7] bg-[#e1e1e1] leading-4">Aceptar</button>
                <button className={`${pushButton} ml-[9px] w-[73px]`}>Cancelar</button>
            </div>
            <div className="h-[19px] shrink-0" />
        </div>
    )
}

/* ---------- bottom table and right panel ---------- */

function NodesPane() {
    return (
        <section className="mt-1 flex h-[111px] shrink-0 flex-col bg-[#dfe3ec] text-black">
            <PaneTitle>1.1 Nudos</PaneTitle>
            <div className="flex h-[25px] shrink-0 items-center bg-linear-to-b from-[#e9edf6] to-[#d5d9e3] pl-2">
                <Tools items="*sheetTri sheetPM sheetDown sheetRamp sheetWave | sheetL sheetR | *curlA *curlB cycle | opPlus opMul opDiv | opX | rowX rowL rowR | tableY tableB | brush | handSheet glasses excel calc | abEq fx fxOff" />
            </div>
            <div className="flex min-h-0 flex-1 overflow-hidden border-t border-l border-[#6d6d6d] bg-[#f0f0f0] pt-0.5">
                <table className="w-full table-fixed border-collapse self-start text-[11px] font-['Liberation_Sans_Narrow','Liberation_Sans',sans-serif]">
                    <colgroup>
                        <col className="w-[46px]" /><col className="w-[72px]" /><col className="w-[90px]" /><col className="w-[78px]" />
                        <col className="w-[78px]" /><col className="w-[78px]" /><col />
                    </colgroup>
                    <thead>
                        <tr>
                            <th rowSpan={3} className="border border-[#6d6d6d] bg-[#e0e0e0] p-0 leading-[13px] font-normal">Nudo<br />núm.</th>
                            <th className="border border-[#6d6d6d] bg-[#3399ff] p-0 leading-[14px] font-normal text-white">A</th>
                            {['B', 'C', 'D', 'E', 'F'].map((c) => <th key={c} className={colHead}>{c}</th>)}
                        </tr>
                        <tr>
                            <th className={label}>Nudo de</th>
                            <th className={label}>Sistema de</th>
                            <th className={label} colSpan={3}>Coordenadas del nudo</th>
                            <th className={label} />
                        </tr>
                        <tr>
                            {['referencia', 'coordenadas', 'X [m]', 'Y [m]', 'Z [m]', 'Comentario'].map((c) => <th key={c} className={label}>{c}</th>)}
                        </tr>
                    </thead>
                    <tbody>
                        <tr className="bg-white">
                            <th className="h-4 border border-[#6d6d6d] bg-[#3399ff] p-0 leading-[15px] font-normal text-white">1</th>
                            <td className={`${cell} text-center`}>0</td>
                            <td className={`${cell} pl-1`}><Mnemonic text="_Cartesiano" /></td>
                            <td className={`${cell} pr-1 text-right`}>0.000</td>
                            <td className={`${cell} pr-1 text-right`}>0.000</td>
                            <td className={`${cell} pr-1 text-right`}>0.000</td>
                            <td className={cell} />
                        </tr>
                    </tbody>
                </table>
                <div className="flex w-[18px] shrink-0 flex-col items-center bg-[#f0f0f0]">
                    <ChevronUp className="mt-1 h-3 w-3 shrink-0 text-[#505050]" strokeWidth={3} />
                </div>
            </div>
        </section>
    )
}

function ResultPanel() {
    return (
        <aside className="flex w-[158px] shrink-0 flex-col bg-[#f0f0f0] text-[11px] text-black font-['Liberation_Sans',sans-serif]">
            <div className="font-['Open_Sans',sans-serif]"><PaneTitle>Panel</PaneTitle></div>
            <div className="flex flex-col pt-1 pr-[7px] pl-[6px]">
                <p className="leading-[17px]">Tensiones<br />Sigma total [kN/cm² ]</p>
                <div className="flex h-[215px] border border-r-white border-b-white border-[#a0a0a0] bg-[#faf7f0] pt-[10px] pl-10">
                    <svg viewBox="0 0 34 194" className="h-[194px] w-[34px] shrink-0" shapeRendering="crispEdges">
                        <path d="M.5 .5h26v193h-26z" fill="#00ffff" stroke="#000" />
                        <path d="M27 .5h6M27 193.500h6" stroke="#000" />
                    </svg>
                    <div className="-my-[7px] flex h-[207px] flex-col justify-between pl-[3px] text-right leading-[14px]">
                        <span>16.91</span>
                        <span>0.00</span>
                    </div>
                </div>
                <div className="mt-[9px] grid grid-cols-[62px_10px_36px] border border-t-[#cfdcfa] border-r-[#a9a9f0] border-b-[#a9a9f0] border-l-[#cfdcfa] bg-[#f5f6f9] text-right leading-[17px]">
                    <span>Máx</span><span>:</span><span>16.91</span>
                    <span>Mín</span><span>:</span><span>0.00</span>
                </div>
                <button disabled className="mx-1 mt-5 h-[23px] border border-[#bfbfbf] bg-[#cccccc] text-xs text-[#838383]">STEEL</button>
                <span className="-mr-0.5 mt-[60px] self-end"><IconButton name="textLens" /></span>
            </div>
        </aside>
    )
}

export default function App() {
    return (
        <div className="flex h-screen flex-col overflow-hidden bg-[#cfd3dc] font-['Open_Sans','Noto_Sans',sans-serif]">
            <TopBars />
            <main className="flex min-h-0 flex-1 gap-[5px]">
                <Navigator />
                <div className="flex min-w-0 flex-1 flex-col">
                    <div className="relative min-h-0 flex-1 overflow-hidden border border-[#808080] bg-[#0a0a0a]">
                        <Scene />
                        <p className="relative px-1 pt-[5px] text-[11px] leading-[14px] text-white font-['Liberation_Sans',sans-serif]">
                            Tensiones Sigma total [kN/cm^2]<br />STEEL CA1 - General stress analysis of steel members
                        </p>
                        <p className="absolute bottom-[5px] left-1 text-[11px] leading-[14px] text-white font-['Liberation_Sans',sans-serif]">
                            Máx.Sigma total: 16.91, Mín. Sigma total: 0.00 kN/cm^2
                        </p>
                        <Dialog />
                    </div>
                    <NodesPane />
                </div>
                <ResultPanel />
            </main>
        </div>
    )
}
